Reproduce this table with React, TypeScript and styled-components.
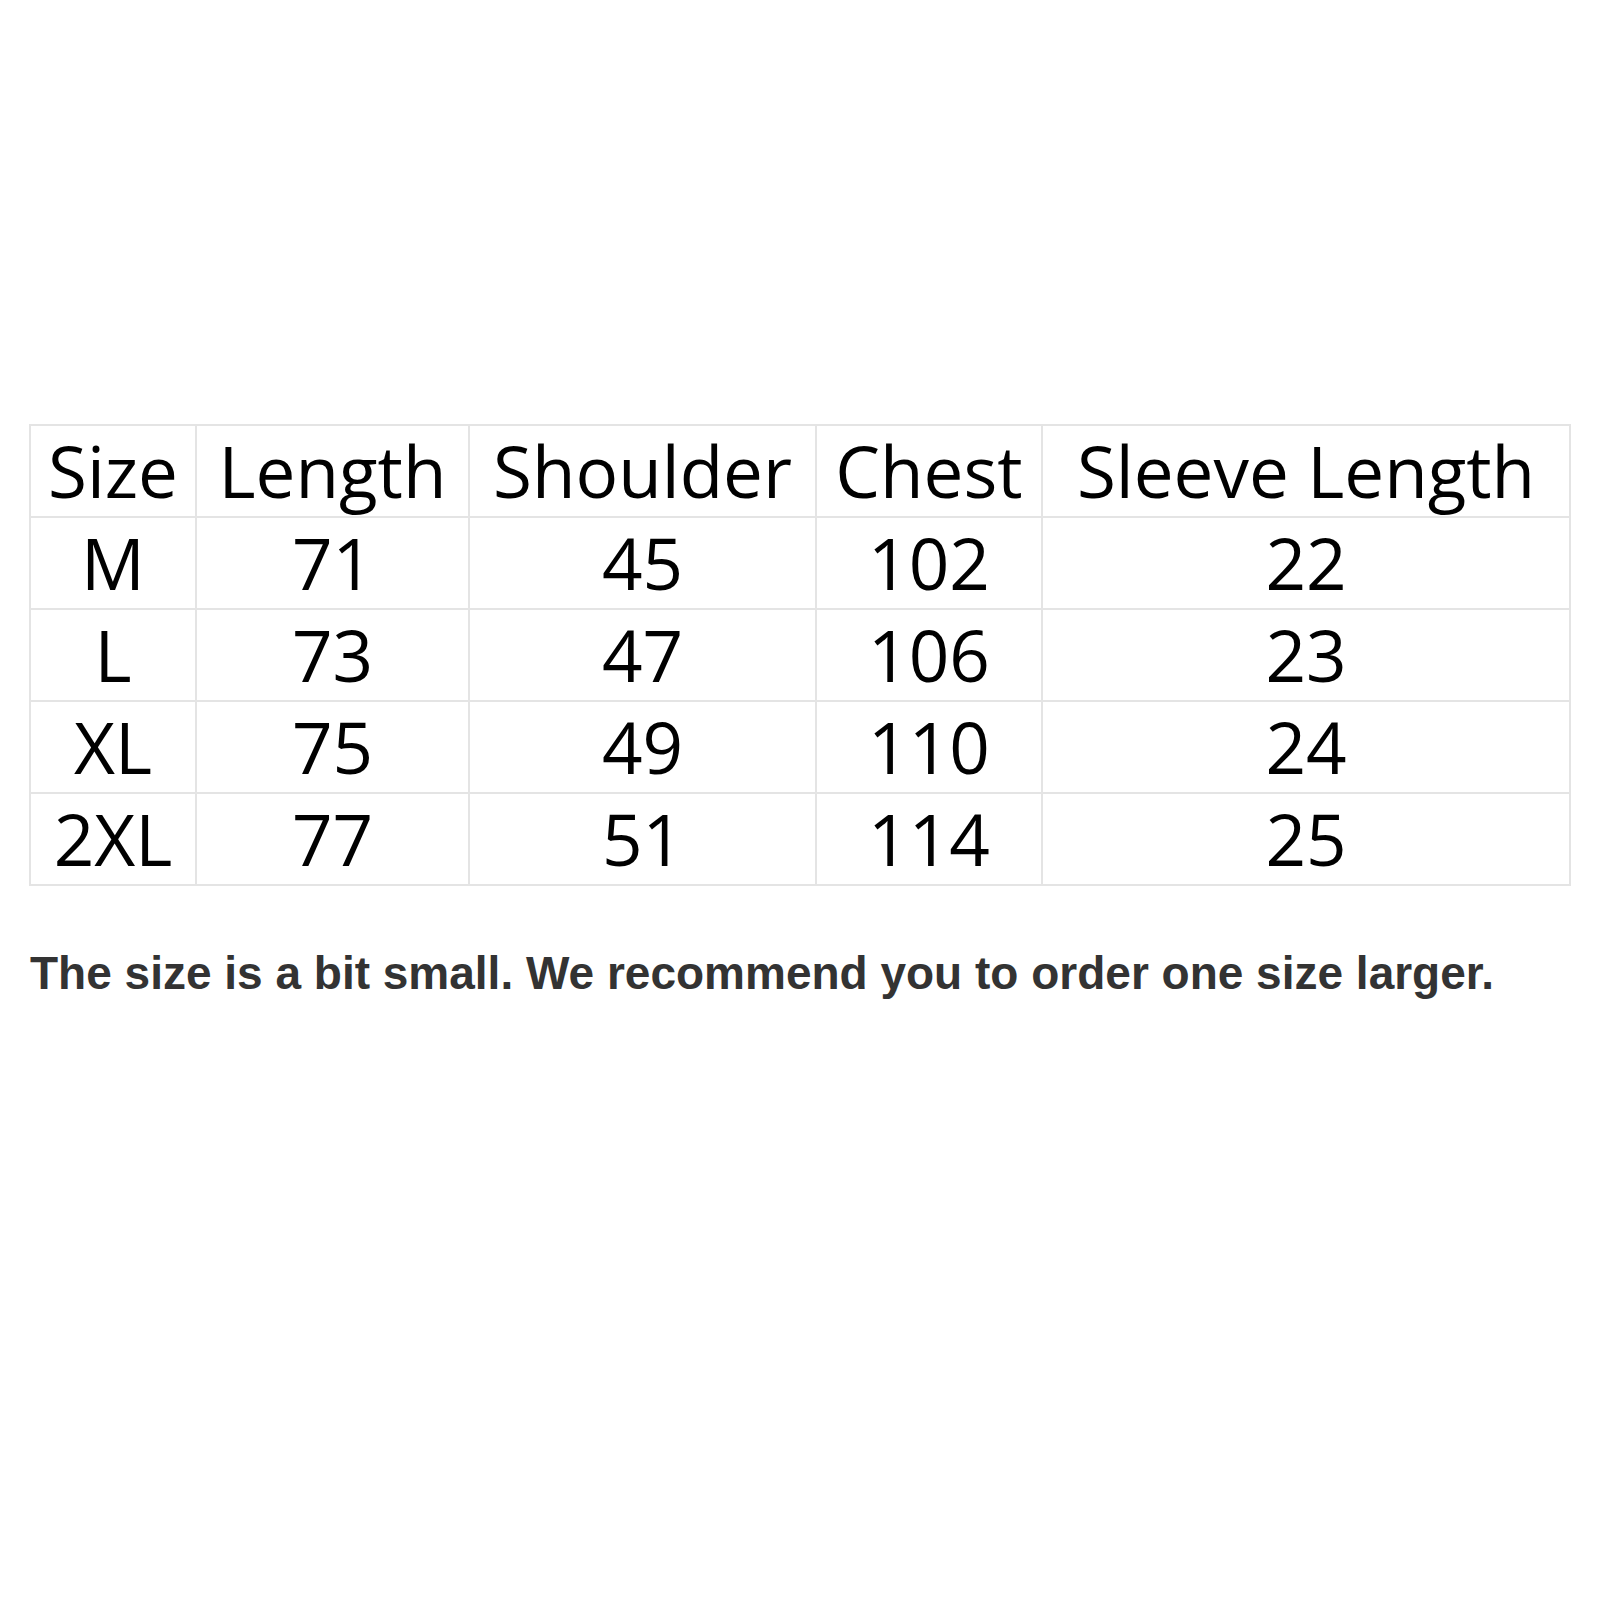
import React from "react";
import styled, { createGlobalStyle } from "styled-components";

const Global = createGlobalStyle`
  html, body { margin: 0; padding: 0; background: #ffffff; }
  #root { width: 1600px; height: 1600px; }
`;

const Page = styled.div`
  width: 1600px;
  height: 1600px;
  box-sizing: border-box;
  padding: 424px 0 0 29px;
  display: flex;
  flex-direction: column;
  align-items: flex-start;
  background: #fff;
`;

const Table = styled.table`
  border-collapse: collapse;
  table-layout: fixed;
  width: 1542px;
  font-family: "Open Sans", "Noto Sans", sans-serif;
  color: #000;
`;

const Cell = styled.td<{ $w?: number }>`
  border: 2px solid #e4e4e4;
  height: 90px;
  padding: 0;
  text-align: center;
  vertical-align: middle;
  font-size: 71px;
  line-height: 1.2;
  white-space: nowrap;
  ${(p) => (p.$w ? `width: ${p.$w}px;` : "")}
`;

const Note = styled.p`
  margin: 64px 0 0 1px;
  font-family: "Liberation Sans", Arial, sans-serif;
  font-weight: 700;
  font-size: 46px;
  color: #333333;
  line-height: 1;
  white-space: nowrap;
`;

const widths = [164, 271, 345, 224, 526];
const header = ["Size", "Length", "Shoulder", "Chest", "Sleeve Length"];
const rows = [
  ["M", "71", "45", "102", "22"],
  ["L", "73", "47", "106", "23"],
  ["XL", "75", "49", "110", "24"],
  ["2XL", "77", "51", "114", "25"],
];

export default function App() {
  return (
    <>
      <Global />
      <Page>
        <Table>
          <tbody>
            <tr>
              {header.map((h, i) => (
                <Cell key={h} $w={widths[i]}>
                  {h}
                </Cell>
              ))}
            </tr>
            {rows.map((r) => (
              <tr key={r[0]}>
                {r.map((c, i) => (
                  <Cell key={i}>{c}</Cell>
                ))}
              </tr>
            ))}
          </tbody>
        </Table>
        <Note>The size is a bit small. We recommend you to order one size larger.</Note>
      </Page>
    </>
  );
}
